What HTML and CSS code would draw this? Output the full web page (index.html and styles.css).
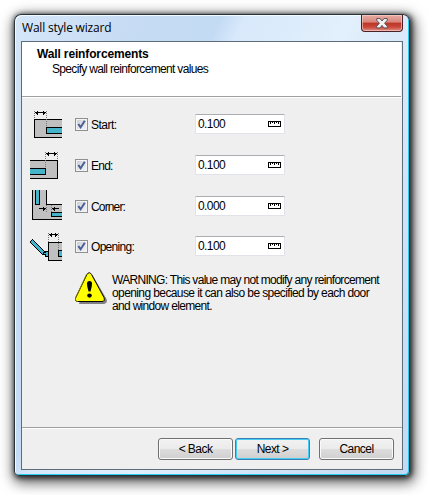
FILE: index.html
```html
<!DOCTYPE html>
<html lang="en">
<head>
<meta charset="utf-8">
<title>Wall style wizard</title>
<link rel="stylesheet" href="styles.css">
</head>
<body>
<main class="window">
  <header class="titlebar">
    <h1 class="title">Wall style wizard</h1>
    <button class="close" aria-label="Close">
      <svg width="12" height="11" viewBox="0 0 12 11"><path d="M.7 .6H4.1L6 3 7.9.6H11.3V2.2L8.6 5.2 11.3 8.3V9.9H7.9L6 7.4 4.1 9.9H.7V8.3L3.4 5.2.7 2.2Z" fill="#f4f4f4" stroke="#56515b"/></svg>
    </button>
  </header>
  <section class="client">
    <div class="heading">
      <h2 class="heading-title">Wall reinforcements</h2>
      <p class="heading-text">Specify wall reinforcement values</p>
    </div>
    <div class="content">
      <div class="row">
        <svg class="icon" viewBox="0 0 32 32">
          <path d="M33 11.5H4.5V29.5H33" fill="#c0c0c0" stroke="#000"/>
          <path d="M33 19.5H16.5V25.5H33" fill="#45b3ca" stroke="#000"/>
          <path d="M4.5 3V11M16.5 3V19" class="dots"/>
          <path d="M5 4.5H16M7.5 2.5V6.5M6.5 3.5V5.5M13.5 2.5V6.5M14.5 3.5V5.5" stroke="#000"/>
        </svg>
        <label class="option"><span class="check"><svg viewBox="0 0 9 9"><path d="M1.3 4 3.6 7.2 7.8.8" /></svg></span><span class="label t-start">Start:</span></label>
        <div class="field"><span>0.100</span><svg class="ruler" viewBox="0 0 13 6"><path d="M.5 .5H12.5V5.5H.5ZM2.5 0V3M4.5 0V2M6.5 0V3M8.5 0V2M10.5 0V3"/></svg></div>
      </div>
      <div class="row">
        <svg class="icon" viewBox="0 0 32 32">
          <path d="M-1 11.5H27.5V29.5H-1" fill="#c0c0c0" stroke="#000"/>
          <path d="M-1 19.5H15.5V25.5H-1" fill="#45b3ca" stroke="#000"/>
          <path d="M15.5 3V19M27.5 3V11" class="dots"/>
          <path d="M16 4.5H27M18.5 2.5V6.5M17.5 3.5V5.5M24.5 2.5V6.5M25.5 3.5V5.5" stroke="#000"/>
        </svg>
        <label class="option"><span class="check"><svg viewBox="0 0 9 9"><path d="M1.3 4 3.6 7.2 7.8.8" /></svg></span><span class="label t-end">End:</span></label>
        <div class="field"><span>0.100</span><svg class="ruler" viewBox="0 0 13 6"><path d="M.5 .5H12.5V5.5H.5ZM2.5 0V3M4.5 0V2M6.5 0V3M8.5 0V2M10.5 0V3"/></svg></div>
      </div>
      <div class="row">
        <svg class="icon" viewBox="0 0 32 32">
          <path d="M2.5 0V29.5H32M32 14.5H16.5V0" fill="none" stroke="#000"/>
          <path d="M3 0H16V15H32V29H3Z" fill="#c0c0c0"/>
          <path d="M5.5 -1V14.5H9.5V-1M33 22.5H21.5V26.5H33" fill="#45b3ca" stroke="#000"/>
          <path d="M16.5 15V23M21.5 15V23" class="dots"/>
          <path d="M9 18.5H16M13.5 16.5V20.5M14.5 17.5V19.5M22 18.5H29M24.5 16.5V20.5M23.5 17.5V19.5" stroke="#000"/>
        </svg>
        <label class="option"><span class="check"><svg viewBox="0 0 9 9"><path d="M1.3 4 3.6 7.2 7.8.8" /></svg></span><span class="label t-corner">Corner:</span></label>
        <div class="field"><span>0.000</span><svg class="ruler" viewBox="0 0 13 6"><path d="M.5 .5H12.5V5.5H.5ZM2.5 0V3M4.5 0V2M6.5 0V3M8.5 0V2M10.5 0V3"/></svg></div>
      </div>
      <div class="row row-last">
        <svg class="icon" viewBox="0 0 32 32">
          <path d="M33 12.5H18.5V30.5H33" fill="#c0c0c0" stroke="#000"/>
          <path d="M33 20.5H28.5V26.5H33" fill="#45b3ca" stroke="#000"/>
          <path d="M1 10.5 14 23.5" stroke="#000" stroke-width="4"/>
          <path d="M1.5 11 14 23.5" stroke="#45b3ca" stroke-width="2.2"/>
          <path d="M15.5 21.5H18.5V26.5H15.5V24.5H13.5V22.5H15.5Z" fill="#45b3ca" stroke="#000"/>
          <path d="M18.5 3V12M28.5 3V20" class="dots"/>
          <path d="M19 4.5H28M21.5 2.5V6.5M20.5 3.5V5.5M25.5 2.5V6.5M26.5 3.5V5.5" stroke="#000"/>
        </svg>
        <label class="option"><span class="check"><svg viewBox="0 0 9 9"><path d="M1.3 4 3.6 7.2 7.8.8" /></svg></span><span class="label t-opening">Opening:</span></label>
        <div class="field"><span>0.100</span><svg class="ruler" viewBox="0 0 13 6"><path d="M.5 .5H12.5V5.5H.5ZM2.5 0V3M4.5 0V2M6.5 0V3M8.5 0V2M10.5 0V3"/></svg></div>
      </div>
      <div class="warning">
        <svg class="warning-icon" viewBox="0 0 32 32">
          <path d="M13.5 3Q16 1 18 4L31.5 27Q33 31 29 32H4Z" fill="#808080"/>
          <path d="M12 2.4Q14.2-1 16.5 2.4L29 25.5Q30.3 29.3 27 29.5H2.5Q-.9 29.2 .8 25.5Z" fill="#ff0" stroke="#000"/>
          <path d="M11.5 2.4.8 25.5Q-.9 29.2 2.5 29.5" fill="none" stroke="#808000"/>
          <path d="M12 11.5Q12 9 14.5 9T17 11.5Q17 15 15.5 19.5H13.5Q12 15 12 11.5Z"/>
          <ellipse cx="14.5" cy="23.6" rx="2.3" ry="2.1"/>
        </svg>
        <p class="warning-text"><span class="line w1">WARNING: This value may not modify any reinforcement</span> <span class="line w2">opening because it can also be specified by each door</span> <span class="line w3">and window element.</span></p>
      </div>
    </div>
    <footer class="footer">
      <button class="btn">&lt; Back</button>
      <button class="btn btn-default">Next &gt;</button>
      <button class="btn btn-cancel">Cancel</button>
    </footer>
  </section>
</main>
</body>
</html>
```
FILE: styles.css
```css
* { box-sizing: border-box; }
body { margin: 0; width: 428px; height: 495px; overflow: hidden; background: #fff; padding: 14px; font: 12px/13px "Liberation Sans", Arial, sans-serif; color: #000; }
h1, h2, p { margin: 0; }
svg { display: block; }
button { font: inherit; color: inherit; padding: 0; }

.window { width: 396px; height: 462px; padding: 0 6px 6px; border: 1px solid #27323b; border-right-color: #17313b; border-bottom-color: #26343e; border-radius: 7px 7px 5px 5px; background: linear-gradient(115deg, #d5e6f8 0, #c5dbf3 22%, #c4dbf4 34%, #d8e9fb 38%, #e2effc 55%, #cfe2f7 80%, #c3d9f2 100%); box-shadow: inset 1px 1px #f4fbff, inset -1px -1px #27cdf0, 1px 1px 5px 1px rgba(0,0,0,.7), 2px 4px 13px 3px rgba(0,0,0,.6); }
.titlebar { height: 26px; display: flex; justify-content: space-between; align-items: flex-start; }
.title { font: 12px/15px "Open Sans", "Noto Sans", sans-serif; margin: 5px 0 0 1px; letter-spacing: -.2px; }
.close { width: 42px; height: 17px; display: flex; justify-content: center; padding-top: 3px; border: 1px solid #4b2028; border-top: 0; border-radius: 0 0 4px 4px; background: linear-gradient(#e8aca4 0, #d7857b 45%, #bc3626 50%, #c9483a 75%, #df9186 100%); box-shadow: inset 0 0 0 1px rgba(255,220,210,.55); }

.client { height: 429px; border: 1px solid #5e6b78; background: #efefef; display: flex; flex-direction: column; }
.heading { height: 55px; flex: none; background: #fff; border-bottom: 1px solid #a0a0a0; padding: 6px 0 0 15px; margin-right: 1px; }
.heading-title { font: bold 12px/13px "Liberation Sans", Arial, sans-serif; letter-spacing: -.14px; }
.heading-text { margin: 2px 0 0 15px; letter-spacing: -.67px; }
.content { flex: 1; padding: 10px 0 0 8px; border-top: 1px solid #fff; }
.row { display: flex; height: 41px; align-items: flex-start; }
.row-last { height: 42px; }
.row:nth-child(3) { height: 40px; }
.icon { width: 32px; height: 32px; overflow: hidden; }
.icon path { shape-rendering: crispEdges; }
.icon path:not([fill]) { fill: none; }
.dots { stroke: #777; stroke-dasharray: 1 1; }
.option { display: flex; align-items: center; gap: 3px; width: 120px; height: 13px; margin: 10px 0 0 13px; }
.label { padding-top: 2px; }
.check { width: 13px; height: 13px; border: 1px solid #8e8f8f; background: linear-gradient(135deg, #c9ced5, #f5f5f5); box-shadow: inset 0 0 0 1px #f4f4f4; }
.check svg { width: 9px; height: 9px; margin: 1px; }
.check path { fill: none; stroke: #4a5f97; stroke-width: 2; }
.t-start { letter-spacing: -.5px; }
.t-end { letter-spacing: -.75px; }
.t-corner { letter-spacing: -.85px; }
.t-opening { letter-spacing: -.7px; }
.field { display: flex; align-items: center; justify-content: space-between; width: 90px; height: 20px; margin-top: 6px; padding: 0 3px 0 2px; border: 1px solid #e2e3ea; border-top-color: #abadb3; border-radius: 1px; background: #fff; letter-spacing: -.6px; }
.ruler { width: 13px; height: 6px; fill: none; stroke: #000; shape-rendering: crispEdges; }
.warning { display: flex; padding-left: 45px; }
.warning-icon { width: 32px; height: 32px; }
.warning-text { margin: 2px 0 0 5px; }
.line { display: block; white-space: nowrap; }
.w1 { letter-spacing: -.69px; }
.w2 { letter-spacing: -.6px; }
.w3 { letter-spacing: -.68px; }

.footer { height: 42px; flex: none; display: flex; justify-content: flex-end; gap: 2px; padding: 10px 8px 0 0; border-top: 1px solid #a0a0a0; box-shadow: inset 0 1px #fff; margin-right: 0; }
.btn { width: 75px; height: 22px; border: 1px solid #707070; border-radius: 3px; background: linear-gradient(#f2f2f2 0, #ebebeb 49%, #dddddd 50%, #cfcfcf 100%); box-shadow: inset 0 0 0 1px #fafafa; letter-spacing: -.55px; }
.btn-default { border-color: #3c7fb1; box-shadow: inset 0 0 0 1px #43cdf5; }
.btn-cancel { margin-left: 7px; }
```
